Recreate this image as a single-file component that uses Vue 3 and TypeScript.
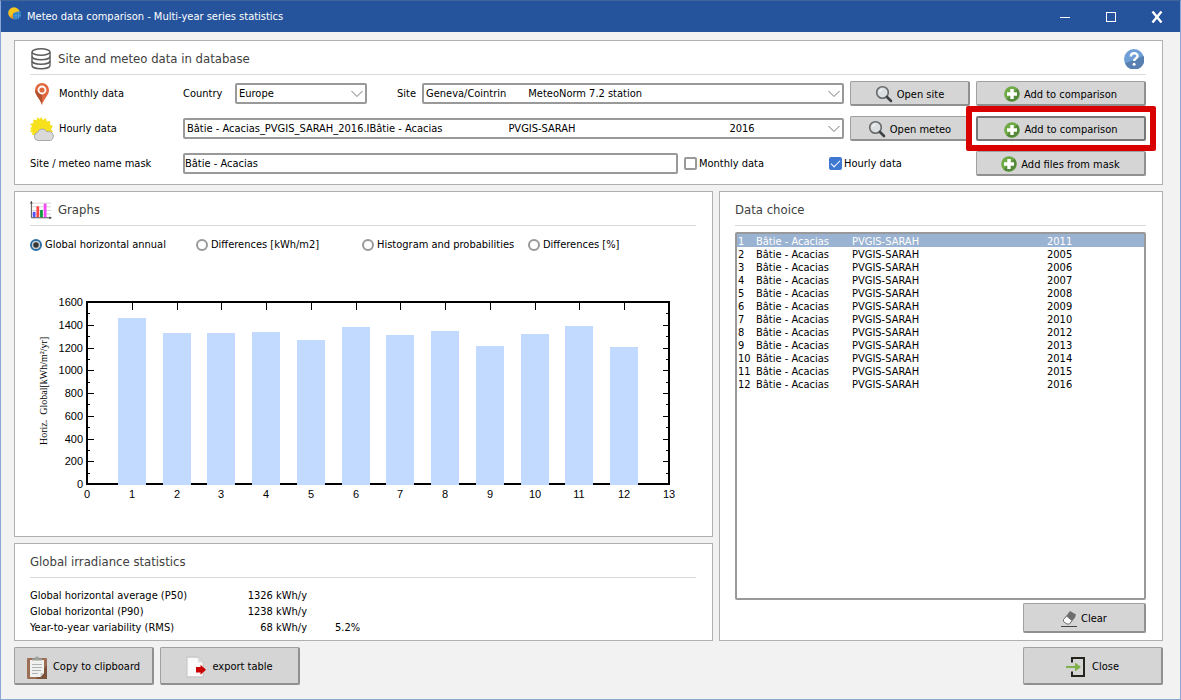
<script setup lang="ts">
import { ref } from 'vue'

interface DataFile {
  id: number
  site: string
  source: string
  year: number
}

const gap = (n: number): string => '\u00a0'.repeat(n)

const country = ref('Europe')
const siteOption = `Geneva/Cointrin${gap(7)}MeteoNorm 7.2 station`
const meteoOption = `Bâtie - Acacias_PVGIS_SARAH_2016.IBâtie - Acacias${gap(21)}PVGIS-SARAH${gap(49)}2016`
const site = ref(siteOption)
const meteo = ref(meteoOption)
const mask = ref('Bâtie - Acacias')
const maskMonthly = ref(false)
const maskHourly = ref(true)

const graphKinds: string[] = [
  'Global horizontal annual',
  'Differences [kWh/m2]',
  'Histogram and probabilities',
  'Differences [%]',
]
const graphKind = ref(graphKinds[0])

const years: number[] = [2011, 2005, 2006, 2007, 2008, 2009, 2010, 2012, 2013, 2014, 2015, 2016]
const files: DataFile[] = years.map((year, i) => ({
  id: i + 1,
  site: 'Bâtie - Acacias',
  source: 'PVGIS-SARAH',
  year,
}))
const selected = ref(1)

const annual: number[] = [1459, 1327, 1327, 1336, 1266, 1380, 1310, 1345, 1213, 1319, 1389, 1204]

// Plot area inside the chart's own coordinate system
const plot = { left: 57, right: 639, top: 47, bottom: 229 }
const xOf = (v: number): number => Math.round(plot.left + ((plot.right - plot.left) * v) / 13)
const yOf = (v: number): number => Math.round(plot.bottom - ((plot.bottom - plot.top) * v) / 1600)
const xTicks: number[] = Array.from({ length: 14 }, (_, i) => i)
const yTicks: number[] = Array.from({ length: 9 }, (_, i) => i * 200)
const yMinor: number[] = Array.from({ length: 8 }, (_, i) => i * 200 + 100)

const stats = [
  { name: 'Global horizontal average (P50)', value: '1326 kWh/y', share: '' },
  { name: 'Global horizontal (P90)', value: '1238 kWh/y', share: '' },
  { name: 'Year-to-year variability (RMS)', value: '68 kWh/y', share: '5.2%' },
]
</script>

<template>
  <div class="window">
    <svg class="defs" width="0" height="0" aria-hidden="true">
      <defs>
        <symbol id="i-plus" viewBox="0 0 16 16">
          <circle cx="8" cy="8" r="7.8" fill="#6eaa45" />
          <path d="M13.5 2.5A7.8 7.8 0 0 1 2.5 13.5z" fill="#55883a" />
          <path d="M6.3 3h3.4v3.3H13v3.4H9.7V13H6.3V9.7H3V6.3h3.3z" fill="#fff" />
        </symbol>
        <symbol id="i-search" viewBox="0 0 18 18">
          <circle cx="7.5" cy="7.5" r="5.8" fill="#dcdfe1" stroke="#66696b" stroke-width="1.6" />
          <path d="M12 12l4 4" stroke="#3f4244" stroke-width="2.6" stroke-linecap="round" />
          <path d="M4.5 7a3.2 3.2 0 0 1 3-2.6" stroke="#fff" fill="none" />
        </symbol>
      </defs>
    </svg>

    <header class="titlebar">
      <svg class="logo" viewBox="0 0 14 14" aria-hidden="true">
        <circle cx="6" cy="6" r="5.8" fill="#f6c520" />
        <path d="M2 10A5.800 5.800 0 0 0 6 11.800V6z" fill="#ee9a1c" />
        <path d="M5 6.500Q8 4 13 4.500V9Q11 12.500 6 12.500Q4.500 9.500 5 6.500z" fill="#2f7fc4" />
        <path d="M5 8.800h7.800M8 5v7.500M10.500 4.500v7.500" stroke="#5fa8dd" stroke-width=".6" />
      </svg>
      <h1>Meteo data comparison - Multi-year series statistics</h1>
      <div class="wm">
        <button type="button" aria-label="Minimize"><svg viewBox="0 0 12 12"><path d="M1 6.500h10" stroke="#fff" /></svg></button>
        <button type="button" aria-label="Maximize"><svg viewBox="0 0 12 12"><rect x="1.500" y="1.500" width="9" height="9" fill="none" stroke="#fff" /></svg></button>
        <button type="button" aria-label="Close window"><svg viewBox="0 0 12 12"><path d="M1.500 .5l9 11M10.500 .5l-9 11" stroke="#fff" stroke-width="2.400" /></svg></button>
      </div>
    </header>

    <main class="body">
      <section class="panel source">
        <div class="head">
          <svg class="head-icon db" viewBox="0 0 20 22" fill="none" stroke="#5c5c5c" stroke-width="1.400" aria-hidden="true">
            <ellipse cx="10" cy="4" rx="9" ry="3.200" />
            <path d="M1 4v4.500c0 1.800 4 3.200 9 3.200s9-1.400 9-3.200V4" />
            <path d="M1 8.500v4.500c0 1.800 4 3.200 9 3.200s9-1.400 9-3.200V8.500" />
            <path d="M1 13v4.500c0 1.800 4 3.200 9 3.200s9-1.400 9-3.200V13" />
          </svg>
          <h2>Site and meteo data in database</h2>
          <button class="help" type="button" aria-label="Help">
            <svg viewBox="0 0 20 20">
              <circle cx="10" cy="10" r="10" fill="#6d9fd6" />
              <path d="M19.600 7A10 10 0 0 1 1 14.500z" fill="#577fb0" />
              <path d="M6.800 7.600c0-4.600 6.700-4.300 6.700-.6 0 2.500-3.400 2.500-3.400 5" fill="none" stroke="#fff" stroke-width="2.400" />
              <circle cx="10.100" cy="15.200" r="1.500" fill="#fff" />
            </svg>
          </button>
        </div>

        <div class="form">
          <div class="name">
            <svg class="name-icon" viewBox="0 0 24 24" aria-hidden="true">
              <path d="M12 23C10.500 17 5 13.500 5 8a7 7 0 0 1 14 0c0 5.500-5.500 9-7 15z" fill="#e2683f" />
              <path d="M12 23C10.500 17 5 13.500 5 8l7 4z" fill="#b5512f" />
              <circle cx="12" cy="8" r="3.500" fill="#e2683f" stroke="#fff" stroke-width="1.800" />
            </svg>
            <span>Monthly data</span>
          </div>
          <div class="fields">
            <label class="country-label" for="country">Country</label>
            <span class="drop country">
              <select id="country" v-model="country"><option>Europe</option></select>
              <svg viewBox="0 0 12 8" aria-hidden="true"><path d="M.5 1l5.500 5.500L11.500 1" fill="none" stroke="#777" /></svg>
            </span>
            <label class="site-label" for="site">Site</label>
            <span class="drop grow">
              <select id="site" v-model="site"><option :value="siteOption">{{ siteOption }}</option></select>
              <svg viewBox="0 0 12 8" aria-hidden="true"><path d="M.5 1l5.500 5.500L11.500 1" fill="none" stroke="#777" /></svg>
            </span>
          </div>
          <button class="btn" type="button"><svg class="s18"><use href="#i-search" /></svg>Open site</button>
          <button class="btn" type="button"><svg class="s16"><use href="#i-plus" /></svg>Add to comparison</button>

          <label class="name" for="meteo">
            <svg class="name-icon" viewBox="0 0 24 24" aria-hidden="true">
              <path d="M11 0l2 3 3-2 .8 3.600L20.500 4l-.7 3.500L23 9l-2 3 2 3H3l1-2-4-.8 2-3L0 7l3.500-1L3 2.500l3.500.8L7.500 0l2.200 2.300z" fill="#f7e11d" />
              <path d="M2 12h9v7H7l-1 1-1.500-2L2 18l.5-2.500L0 15z" fill="#f7e11d" />
              <path d="M8 23.500a4 4 0 0 1-.5-7.900 5 5 0 0 1 9.300-.8 4.500 4.500 0 0 1 3.700 8.700z" fill="#d9d9d9" stroke="#aaa" />
            </svg>
            <span>Hourly data</span>
          </label>
          <div class="fields">
            <span class="drop grow">
              <select id="meteo" v-model="meteo"><option :value="meteoOption">{{ meteoOption }}</option></select>
              <svg viewBox="0 0 12 8" aria-hidden="true"><path d="M.5 1l5.500 5.500L11.500 1" fill="none" stroke="#777" /></svg>
            </span>
          </div>
          <button class="btn" type="button"><svg class="s18"><use href="#i-search" /></svg>Open meteo</button>
          <div class="marked">
            <button class="btn focus" type="button"><svg class="s16"><use href="#i-plus" /></svg>Add to comparison</button>
          </div>

          <label class="name" for="mask">Site / meteo name mask</label>
          <div class="fields wide">
            <input id="mask" v-model="mask" class="text" type="text" />
            <label class="check monthly"><input v-model="maskMonthly" type="checkbox" />Monthly data</label>
            <label class="check hourly"><input v-model="maskHourly" type="checkbox" />Hourly data</label>
          </div>
          <button class="btn" type="button"><svg class="s16"><use href="#i-plus" /></svg>Add files from mask</button>
        </div>
      </section>

      <div class="columns">
        <div class="left">
          <section class="panel graphs">
            <div class="head">
              <svg class="head-icon chart-icon" viewBox="0 0 24 20" aria-hidden="true">
                <path d="M2 2.500h21M2 6.500h21M2 10.500h21M2 14.500h21" stroke="#d3d3d3" />
                <path d="M3 12h3v6H3z" fill="#5050ff" /><path d="M7 6h3v12H7z" fill="#ff4545" />
                <path d="M11 10h3v8h-3z" fill="#0c9a3c" /><path d="M15 3h3v15h-3z" fill="#f548f5" />
                <path d="M1.500 1v17.500H23" fill="none" stroke="#444" />
                <path d="M0 3l1.500-3L3 3zM21 17l3 1.500-3 1.500z" fill="#444" />
              </svg>
              <h2>Graphs</h2>
            </div>
            <div class="radios" role="radiogroup" aria-label="Graph type">
              <label v-for="k in graphKinds" :key="k"><input v-model="graphKind" type="radio" name="graph" :value="k" />{{ k }}</label>
            </div>
            <svg class="chart" viewBox="0 0 666 280" role="img" aria-label="Horizontal global per year">
              <rect :x="plot.left" :y="plot.top" :width="plot.right - plot.left" :height="plot.bottom - plot.top" fill="none" stroke="#000" stroke-width="2" />
              <g class="ticks">
                <rect v-for="t in xTicks.slice(1, 13)" :key="'x' + t" :x="xOf(t)" :y="plot.top" width="1" height="8" />
                <template v-for="t in yTicks.slice(1, 8)" :key="'y' + t">
                  <rect :x="plot.left" :y="yOf(t)" width="7" height="1" />
                  <rect :x="plot.right - 6" :y="yOf(t)" width="6" height="1" />
                </template>
                <template v-for="t in yMinor" :key="'m' + t">
                  <rect :x="plot.left" :y="yOf(t)" width="3" height="1" />
                  <rect :x="plot.right - 3" :y="yOf(t)" width="3" height="1" />
                </template>
              </g>
              <rect v-for="(v, i) in annual" :key="i" :x="xOf(i + 1) - 14" :y="yOf(v)" width="28" :height="plot.bottom + 1 - yOf(v)" fill="#c2daff" />
              <text v-for="t in yTicks" :key="'yl' + t" :x="plot.left - 4" :y="yOf(t) + 4" text-anchor="end">{{ t }}</text>
              <text v-for="t in xTicks" :key="'xl' + t" :x="xOf(t)" :y="plot.bottom + 14" text-anchor="middle">{{ t }}</text>
              <text class="axis" transform="translate(17 190) rotate(-90)">Horiz.&nbsp; Global[kWh/m²/yr]</text>
            </svg>
          </section>

          <section class="panel stats">
            <div class="head"><h2>Global irradiance statistics</h2></div>
            <table>
              <tbody>
                <tr v-for="s in stats" :key="s.name">
                  <th scope="row">{{ s.name }}</th>
                  <td class="num">{{ s.value }}</td>
                  <td class="share">{{ s.share }}</td>
                </tr>
              </tbody>
            </table>
          </section>
        </div>

        <section class="panel choice">
          <div class="head"><h2>Data choice</h2></div>
          <div class="list">
            <table>
              <tbody>
                <tr v-for="f in files" :key="f.id" :class="{ on: f.id === selected }" @click="selected = f.id">
                  <td class="c-id">{{ f.id }}</td>
                  <td class="c-site">{{ f.site }}</td>
                  <td class="c-source">{{ f.source }}</td>
                  <td>{{ f.year }}</td>
                </tr>
              </tbody>
            </table>
          </div>
          <button class="btn clear" type="button">
            <svg class="s16" viewBox="0 0 16 16">
              <path d="M9 0l6 3.500-1 3-4 5L4.500 6z" fill="#6e6e6e" />
              <path d="M5.500 5L2.500 8.500v2L6 13h2.500l2.500-3.500z" fill="#fff" stroke="#6e6e6e" />
              <path d="M0 15.500h16" stroke="#444" />
            </svg>Clear
          </button>
        </section>
      </div>

      <footer class="actions">
        <button class="btn big" type="button">
          <svg class="s24" viewBox="0 0 20 24">
            <rect x="0" y="3" width="20" height="21" rx="1" fill="#9c6f55" />
            <path d="M20 10v14H9z" fill="#7c523c" />
            <path d="M3 5h14v13l-3.500 4H3z" fill="#f1f1ef" />
            <path d="M17 18l-3.500 4v-4z" fill="#c9c9c6" />
            <path d="M5 9.500h10M5 12.500h10M5 15.500h9M5 18.500h6" stroke="#aeb3b6" />
            <path d="M5 5.500V3.500h3a2 2 0 0 1 4 0h3v2z" fill="#9ba29c" />
          </svg>Copy to clipboard
        </button>
        <button class="btn big" type="button">
          <svg class="s24" viewBox="0 0 22 24">
            <path d="M1 1h12l6 6v16H1z" fill="#fafafa" stroke="#c9c9c9" stroke-width="1.500" />
            <path d="M13 1v6h6z" fill="#dcdcdc" />
            <path d="M11 12h5V9.500l6 5.500-6 5.500V18h-5z" fill="#cc0000" />
          </svg>export table
        </button>
        <button class="btn big close" type="button">
          <svg class="s20" viewBox="0 0 20 20">
            <path d="M6 5.500V1h12v18H6v-4.500" fill="none" stroke="#24241c" stroke-width="2" />
            <path d="M0 9h9V5.500l6 4.500-6 4.500V11H0z" fill="#7fb24a" />
          </svg>Close
        </button>
      </footer>
    </main>
  </div>
</template>

<style>
body {
  background: #f2f2f2;
}
</style>

<style scoped>
* {
  box-sizing: border-box;
}
.window {
  min-height: 100vh;
  display: flex;
  flex-direction: column;
  border: 1px solid #8aa7d6;
  border-top-color: #40659b;
  background: #f2f2f2;
  color: #000;
  font: 11px/13px 'DejaVu Sans Condensed', 'DejaVu Sans', sans-serif;
}
.defs {
  position: absolute;
}
.titlebar {
  display: flex;
  align-items: center;
  height: 31px;
  padding: 0 0 0 7px;
  background: #25539c;
  color: #fff;
}
.logo {
  width: 14px;
  height: 14px;
  margin: 0 5px 6px 0;
}
h1 {
  margin: 0;
  font-size: 11px;
  font-weight: 400;
}
.wm {
  display: flex;
  margin-left: auto;
}
.wm button {
  display: flex;
  align-items: center;
  justify-content: center;
  width: 46px;
  height: 31px;
  padding: 0;
  border: 0;
  background: none;
}
.wm svg {
  width: 12px;
  height: 12px;
}
.body {
  flex: 1;
  display: flex;
  flex-direction: column;
  gap: 6px;
  padding: 8px 17px 14px 13px;
}
.panel {
  padding: 0 16px 0 15px;
  border: 1px solid #b0b0b0;
  background: #fff;
}
.head {
  display: flex;
  align-items: center;
  height: 34px;
  padding-top: 2px;
  border-bottom: 1px solid #dadada;
}
h2 {
  margin: 0;
  color: #404040;
  font-size: 13px;
  line-height: 16px;
  font-weight: 400;
}
.head-icon {
  margin-right: 6px;
}
.db {
  width: 22px;
  height: 22px;
}
.chart-icon {
  width: 22px;
  height: 20px;
}
.help {
  width: 20px;
  height: 20px;
  margin-left: auto;
  margin-right: 2px;
  padding: 0;
  border: 0;
  background: none;
}
.help svg {
  display: block;
}
.form {
  display: grid;
  grid-template-columns: 147px 1fr 120px 170px;
  grid-auto-rows: 25px;
  gap: 10px 6px;
  padding: 6px 0 8px;
  align-items: center;
}
.name {
  display: flex;
  align-items: center;
}
.name-icon {
  width: 24px;
  height: 24px;
  margin-right: 5px;
}
.fields {
  display: flex;
  align-items: center;
}
.wide {
  grid-column: 2 / 4;
}
.country-label {
  width: 52px;
}
.site-label {
  width: 55px;
  padding-right: 6px;
  text-align: right;
}
.drop {
  position: relative;
  display: flex;
}
.country {
  width: 132px;
}
.grow {
  flex: 1;
}
.drop svg {
  position: absolute;
  right: 4px;
  top: 7px;
  width: 12px;
  height: 8px;
  pointer-events: none;
}
select,
.text {
  width: 100%;
  height: 21px;
  padding: 0 2px;
  border: 2px solid #999;
  border-radius: 2px;
  background: #fff;
  color: #000;
  font: inherit;
  appearance: none;
}
.text {
  flex: 1;
  padding: 0;
}
.check {
  display: flex;
  align-items: center;
  gap: 2px;
}
.monthly {
  width: 151px;
  padding-left: 6px;
}
.hourly {
  width: 141px;
}
.check input {
  appearance: none;
  width: 13px;
  height: 13px;
  margin: 0;
  border: 2px solid #999;
  border-radius: 2px;
  background: #fff;
}
.check input:checked {
  border-color: #3f78d0;
  background: #3f78d0;
}
.check input:checked::before {
  content: '';
  display: block;
  width: 8px;
  height: 4px;
  margin-top: 1px;
  border-left: 1px solid #fff;
  border-bottom: 1px solid #fff;
  rotate: -45deg;
}
.btn {
  display: flex;
  align-items: center;
  justify-content: center;
  gap: 4px;
  width: 100%;
  height: 25px;
  padding: 2px 0 0;
  border: 1px solid #a0a0a0;
  border-right: 2px solid #909090;
  border-bottom: 2px solid #909090;
  border-radius: 2px;
  background: #d5d5d5;
  color: #000;
  font: inherit;
}
.focus {
  border: 2px solid #787878;
}
.marked {
  position: relative;
}
.marked::before {
  content: '';
  position: absolute;
  inset: -10px;
  border: 6px solid #d90000;
  border-radius: 2px;
  background: #fff;
}
.marked .btn {
  position: relative;
}
.s16 {
  width: 16px;
  height: 16px;
}
.s18 {
  width: 18px;
  height: 18px;
}
.s20 {
  width: 20px;
  height: 20px;
}
.s24 {
  width: 20px;
  height: 24px;
}
.columns {
  flex: 1;
  display: grid;
  grid-template-columns: 699fr 444fr;
  gap: 6px;
}
.left {
  display: flex;
  flex-direction: column;
  gap: 6px;
}
.graphs {
  flex: 1;
}
.radios {
  display: grid;
  grid-template-columns: repeat(4, 166px);
  padding-top: 12px;
}
.radios label {
  display: flex;
  align-items: center;
  gap: 3px;
}
.radios input {
  appearance: none;
  width: 12px;
  height: 12px;
  margin: 0;
  border: 2px solid #999;
  border-radius: 50%;
}
.radios input:checked {
  border-color: #2f6fa3;
  background: radial-gradient(circle, #333 0 2px, #fff 4px);
}
.chart {
  display: block;
  width: 100%;
  margin-top: 4px;
}
.chart text {
  font: 11px 'Liberation Sans', Arial, sans-serif;
}
.chart .axis {
  font: 10px 'Liberation Serif', 'Times New Roman', serif;
}
.stats {
  height: 98px;
}
table {
  border-collapse: collapse;
}
th,
td {
  padding: 0;
  font-weight: 400;
  text-align: left;
  white-space: nowrap;
}
.stats table {
  margin-top: 9px;
}
.stats tr {
  height: 16px;
}
.stats th {
  width: 187px;
}
.stats .num {
  width: 90px;
  text-align: right;
}
.stats .share {
  padding-left: 28px;
}
.choice {
  display: flex;
  flex-direction: column;
  padding-bottom: 7px;
}
.list {
  flex: 1;
  margin: 6px 0 3px;
  border: 2px solid #999;
  border-radius: 2px;
}
.list table {
  width: 100%;
  table-layout: fixed;
}
.list td {
  height: 13px;
  padding-top: 3px;
  line-height: 10px;
}
.list .on {
  background: #9ab3d2;
  color: #fff;
}
.list .c-id {
  width: 19px;
  padding-left: 1px;
}
.c-site {
  width: 96px;
}
.c-source {
  width: 195px;
}
.clear {
  align-self: flex-end;
  width: 123px;
  height: 30px;
}
.actions {
  display: flex;
  gap: 6px;
}
.big {
  width: 140px;
  height: 38px;
  gap: 6px;
}
.close {
  margin-left: auto;
}
</style>
